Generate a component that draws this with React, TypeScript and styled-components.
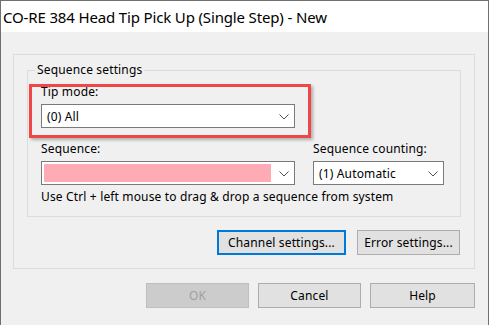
import React from "react";
import styled, { createGlobalStyle } from "styled-components";

const GlobalStyle = createGlobalStyle`
    html, body {
        margin: 0;
        padding: 0;
        background: #f0f0f0;
    }
    * {
        box-sizing: border-box;
    }
`;

const FONT = `"Noto Sans", "Open Sans", sans-serif`;

const Window = styled.div`
    width: 489px;
    height: 325px;
    display: flex;
    flex-direction: column;
    border: 1px solid #6f6f6f;
    border-bottom: none;
    font-family: ${FONT};
    font-size: 12px;
    letter-spacing: 0.15px;
    color: #000;
    overflow: hidden;
`;

const TitleBar = styled.div`
    height: 31px;
    flex: none;
    display: flex;
    align-items: center;
    padding-left: 2px;
    background: #fff;
    font-size: 15px;
    letter-spacing: -0.15px;
`;

const Body = styled.div`
    flex: 1;
    display: flex;
    flex-direction: column;
    padding: 22px 13px 0 12px;
    background: #f0f0f0;
`;

const OuterBox = styled.div`
    display: flex;
    flex-direction: column;
    padding: 15px 13px 13px 13px;
    border: 1px solid #dcdcdc;
`;

const GroupBox = styled.div`
    position: relative;
    height: 147px;
    padding: 13px 13px 0 13px;
    border: 1px solid #dcdcdc;
`;

const GroupCaption = styled.span`
    position: absolute;
    top: -9px;
    left: 7px;
    padding: 0 2px;
    line-height: 15px;
    background: #f0f0f0;
`;

const Highlight = styled.div`
    position: absolute;
    left: 1px;
    top: 13px;
    width: 282px;
    height: 54px;
    border: 3px solid #f04646;
    box-shadow: 2px 2px 3px rgba(0, 0, 0, 0.28);
    pointer-events: none;
`;

const Label = styled.div`
    line-height: 15px;
    margin-bottom: 5px;
    white-space: nowrap;
`;

const Field = styled.div<{ $width: number }>`
    width: ${(p) => p.$width}px;
    display: flex;
    flex-direction: column;
`;

const Combo = styled.div`
    position: relative;
    height: 24px;
    display: flex;
    align-items: center;
    padding: 2px 20px 2px 5px;
    background: #fff;
    border: 1px solid #7a7a7a;
    line-height: 15px;
`;

const EmptyValue = styled.div`
    align-self: stretch;
    width: 227px;
    margin-left: -3px;
    background: #ffabb5;
`;

const Chevron = styled.svg`
    position: absolute;
    right: 5px;
    top: 9px;
`;

const SequenceRow = styled.div`
    display: flex;
    gap: 18px;
    margin-top: 13px;
`;

const Hint = styled.div`
    margin-top: 4px;
    line-height: 15px;
    white-space: nowrap;
`;

const ButtonRow = styled.div<{ $gap: number }>`
    display: flex;
    justify-content: flex-end;
    gap: ${(p) => p.$gap}px;
`;

const Button = styled.button<{ $width: number; $default?: boolean }>`
    width: ${(p) => p.$width}px;
    height: 25px;
    padding: 0;
    font-family: ${FONT};
    font-size: 12px;
    letter-spacing: 0.15px;
    color: #000;
    background: #e1e1e1;
    border: ${(p) => (p.$default ? "2px solid #0078d7" : "1px solid #adadad")};
    border-radius: 0;

    &:disabled {
        color: #a0a0a0;
        background: #cccccc;
        border-color: #bfbfbf;
    }
`;

const ChevronIcon = () => (
    <Chevron width="10" height="6" viewBox="0 0 10 6">
        <polyline points="0.5,0.5 5,5 9.5,0.5" fill="none" stroke="#505050" strokeWidth="1" />
    </Chevron>
);

export default function App() {
    return (
        <Window>
            <GlobalStyle />
            <TitleBar>CO-RE 384 Head Tip Pick Up (Single Step) - New</TitleBar>
            <Body>
                <OuterBox>
                    <GroupBox>
                        <GroupCaption>Sequence settings</GroupCaption>
                        <Field $width={254}>
                            <Label>Tip mode:</Label>
                            <Combo>
                                (0) All
                                <ChevronIcon />
                            </Combo>
                        </Field>
                        <SequenceRow>
                            <Field $width={254}>
                                <Label>Sequence:</Label>
                                <Combo>
                                    <EmptyValue />
                                    <ChevronIcon />
                                </Combo>
                            </Field>
                            <Field $width={131}>
                                <Label>Sequence counting:</Label>
                                <Combo>
                                    (1) Automatic
                                    <ChevronIcon />
                                </Combo>
                            </Field>
                        </SequenceRow>
                        <Hint>Use Ctrl + left mouse to drag &amp; drop a sequence from system</Hint>
                        <Highlight />
                    </GroupBox>
                    <ButtonRow $gap={11} style={{ marginTop: 13, paddingRight: 1 }}>
                        <Button $width={129} $default>
                            Channel settings...
                        </Button>
                        <Button $width={103}>Error settings...</Button>
                    </ButtonRow>
                </OuterBox>
                <ButtonRow $gap={9} style={{ marginTop: 14 }}>
                    <Button $width={103} disabled>
                        OK
                    </Button>
                    <Button $width={103}>Cancel</Button>
                    <Button $width={105}>Help</Button>
                </ButtonRow>
            </Body>
        </Window>
    );
}
